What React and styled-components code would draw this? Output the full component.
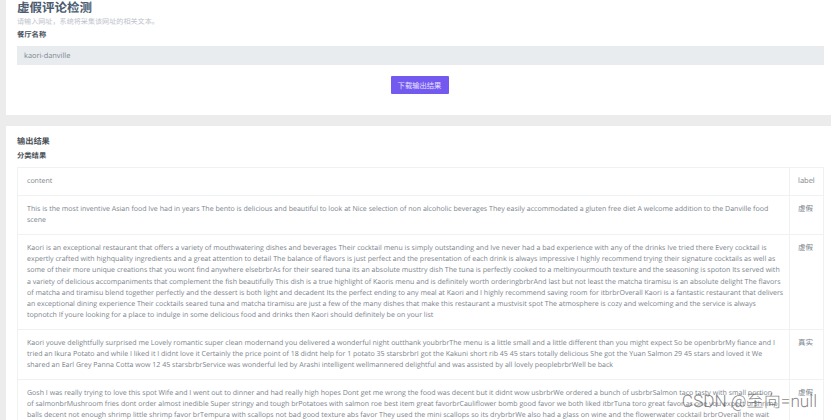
import React from 'react';
import styled, { createGlobalStyle } from 'styled-components';

const cjk = '"Noto Sans CJK SC", sans-serif';

const GlobalStyle = createGlobalStyle`
    html, body {
        margin: 0;
        height: 420px;
        overflow: hidden;
        background: #ececec;
    }
    * { box-sizing: border-box; }
`

const Page = styled.div`
    position: relative;
    height: 420px;
    overflow: hidden;
    padding-left: 6px;
    display: flex;
    flex-direction: column;
    gap: 11px;
    font-family: "Open Sans", ${cjk};
    text-rendering: geometricPrecision;
`

const Card = styled.section`
    background: #fff;
    padding: ${(p) => p.$pad};
    height: ${(p) => p.$height};
    flex: none;
`

const Title = styled.h1`
    margin: 1px 0 0;
    font-size: 12.5px;
    line-height: 14px;
    font-weight: 700;
    color: #4a5b6e;
`

const Hint = styled.p`
    margin: 2px 0 0;
    font-size: 7.1px;
    line-height: 11px;
    color: #bcc3ca;
`

const FieldLabel = styled.label`
    display: block;
    margin-top: 2px;
    font-size: 7.3px;
    line-height: 11px;
    font-weight: 700;
    color: #4a545e;
`

const Input = styled.div`
    margin-top: 5px;
    height: 19px;
    margin-right: 1px;
    padding-left: 7px;
    display: flex;
    align-items: center;
    background: #e9ecef;
    font-size: 7.4px;
    color: #7d8790;
`

const ButtonRow = styled.div`
    display: flex;
    justify-content: center;
    margin-top: 11px;
    padding-right: 3px;
`

const Button = styled.button`
    width: 58px;
    height: 18px;
    padding: 0;
    border: 0;
    border-radius: 1px;
    background: #7359ef;
    color: #e6e0ff;
    font-family: ${cjk};
    font-size: 7.3px;
`

const SectionTitle = styled.h2`
    margin: 0;
    font-size: 8.2px;
    line-height: 12px;
    font-weight: 700;
    color: #4a5058;
`

const SubTitle = styled.h3`
    margin: 2px 0 5px;
    font-size: 7.3px;
    line-height: 12px;
    font-weight: 700;
    color: #4a5058;
`

const Table = styled.table`
    width: 807px;
    table-layout: fixed;
    border-collapse: collapse;
    border: 1px solid #eff1f3;
`

const Cell = styled.td`
    padding: 8px 8px 8px 9px;
    border: 1px solid #eff1f3;
    vertical-align: top;
    font-size: 7.06px;
    line-height: 11.1px;
    color: #7b838b;
    text-align: left;
    font-weight: 400;
`

const LabelCell = styled(Cell)`
    width: 34px;
    padding: 8px 0 0 8px;
    font-size: 7.5px;
    color: #7b838b;
`

const Line = styled.span`
    display: block;
    white-space: nowrap;
`

const Watermark = styled.div`
    position: absolute;
    right: 14px;
    bottom: 8px;
    font-family: Roboto, ${cjk};
    font-size: 17.2px;
    line-height: 20px;
    font-weight: 300;
    color: rgba(80, 80, 80, 0.7);
`

const rows = [
    {
        label: '虚假',
        lines: [
            'This is the most inventive Asian food Ive had in years The bento is delicious and beautiful to look at Nice selection of non alcoholic beverages They easily accommodated a gluten free diet A welcome addition to the Danville food',
            'scene',
        ],
    },
    {
        label: '虚假',
        lines: [
            'Kaori is an exceptional restaurant that offers a variety of mouthwatering dishes and beverages Their cocktail menu is simply outstanding and Ive never had a bad experience with any of the drinks Ive tried there Every cocktail is',
            'expertly crafted with highquality ingredients and a great attention to detail The balance of flavors is just perfect and the presentation of each drink is always impressive I highly recommend trying their signature cocktails as well as',
            'some of their more unique creations that you wont find anywhere elsebrbrAs for their seared tuna its an absolute musttry dish The tuna is perfectly cooked to a meltinyourmouth texture and the seasoning is spoton Its served with',
            'a variety of delicious accompaniments that complement the fish beautifully This dish is a true highlight of Kaoris menu and is definitely worth orderingbrbrAnd last but not least the matcha tiramisu is an absolute delight The flavors',
            'of matcha and tiramisu blend together perfectly and the dessert is both light and decadent Its the perfect ending to any meal at Kaori and I highly recommend saving room for itbrbrOverall Kaori is a fantastic restaurant that delivers',
            'an exceptional dining experience Their cocktails seared tuna and matcha tiramisu are just a few of the many dishes that make this restaurant a mustvisit spot The atmosphere is cozy and welcoming and the service is always',
            'topnotch If youre looking for a place to indulge in some delicious food and drinks then Kaori should definitely be on your list',
        ],
    },
    {
        label: '真实',
        lines: [
            'Kaori youve delightfully surprised me Lovely romantic super clean modernand you delivered a wonderful night outthank youbrbrThe menu is a little small and a little different than you might expect So be openbrbrMy fiance and I',
            'tried an Ikura Potato and while I liked it I didnt love it Certainly the price point of 18 didnt help for 1 potato 35 starsbrbrI got the Kakuni short rib 45 45 stars totally delicious She got the Yuan Salmon 29 45 stars and loved it We',
            'shared an Earl Grey Panna Cotta wow 12 45 starsbrbrService was wonderful led by Arashi intelligent wellmannered delightful and was assisted by all lovely peoplebrbrWell be back',
        ],
    },
    {
        label: '虚假',
        lines: [
            'Gosh I was really trying to love this spot Wife and I went out to dinner and had really high hopes Dont get me wrong the food was decent but it didnt wow usbrbrWe ordered a bunch of usbrbrSalmon taco tasty with small portion',
            'of salmonbrMushroom fries dont order almost inedible Super stringy and tough brPotatoes with salmon roe best item great favorbrCauliflower bomb good favor we both liked itbrTuna toro great favor as one you expect brShrimp',
            'balls decent not enough shrimp little shrimp favor brTempura with scallops not bad good texture abs favor They used the mini scallops so its drybrbrWe also had a glass on wine and the flowerwater cocktail brbrOverall the wait',
        ],
    },
];

const App = () => (
    <Page>
        <GlobalStyle />
        <Card $pad="0 6px 0 11px" $height="115px">
            <Title>虚假评论检测</Title>
            <Hint>请输入网址，系统将采集该网址的相关文本。</Hint>
            <FieldLabel>餐厅名称</FieldLabel>
            <Input>kaori-danville</Input>
            <ButtonRow>
                <Button>下载输出结果</Button>
            </ButtonRow>
        </Card>
        <Card $pad="10px 0 0 11px" $height="300px">
            <SectionTitle>输出结果</SectionTitle>
            <SubTitle>分类结果</SubTitle>
            <Table>
                <tbody>
                    <tr>
                        <Cell as="th">content</Cell>
                        <LabelCell as="th">label</LabelCell>
                    </tr>
                    {rows.map((row) => (
                        <tr key={row.lines[0]}>
                            <Cell>
                                {row.lines.map((line) => <Line key={line}>{line}</Line>)}
                            </Cell>
                            <LabelCell>{row.label}</LabelCell>
                        </tr>
                    ))}
                </tbody>
            </Table>
        </Card>
        <Watermark>CSDN @至向=null</Watermark>
    </Page>
);

export default App;
